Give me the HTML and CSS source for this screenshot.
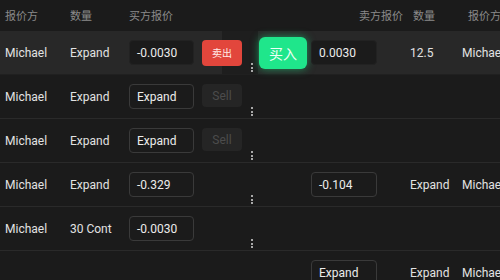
FILE: index.html
```html
<!DOCTYPE html>
<html lang="zh">
<head>
<meta charset="utf-8">
<link rel="stylesheet" href="styles.css">
</head>
<body>
<div class="book">
  <div class="head">
    <span class="h h-name">报价方</span>
    <span class="h h-qty">数量</span>
    <span class="h h-bid">买方报价</span>
    <span class="h h-ask">卖方报价</span>
    <span class="h h-qty2">数量</span>
    <span class="h h-name2">报价方</span>
  </div>

  <div class="row row-active">
    <span class="cell name">Michael</span>
    <span class="cell qty">Expand</span>
    <span class="cell bid"><span class="box box-fill">-0.0030</span></span>
    <span class="cell sell"><span class="btn btn-sell">卖出</span></span>
    <span class="cell grip"><i></i><i></i><i></i></span>
    <span class="cell buy"><span class="btn btn-buy">买入</span></span>
    <span class="cell ask"><span class="box box-fill">0.0030</span></span>
    <span class="cell qty2">12.5</span>
    <span class="cell name2">Michael</span>
  </div>

  <div class="row">
    <span class="cell name">Michael</span>
    <span class="cell qty">Expand</span>
    <span class="cell bid"><span class="box">Expand</span></span>
    <span class="cell sell"><span class="btn btn-off">Sell</span></span>
    <span class="cell grip"><i></i><i></i><i></i></span>
    <span class="cell buy"></span>
    <span class="cell ask"></span>
    <span class="cell qty2"></span>
    <span class="cell name2"></span>
  </div>

  <div class="row">
    <span class="cell name">Michael</span>
    <span class="cell qty">Expand</span>
    <span class="cell bid"><span class="box">Expand</span></span>
    <span class="cell sell"><span class="btn btn-off">Sell</span></span>
    <span class="cell grip"><i></i><i></i><i></i></span>
    <span class="cell buy"></span>
    <span class="cell ask"></span>
    <span class="cell qty2"></span>
    <span class="cell name2"></span>
  </div>

  <div class="row">
    <span class="cell name">Michael</span>
    <span class="cell qty">Expand</span>
    <span class="cell bid"><span class="box">-0.329</span></span>
    <span class="cell sell"></span>
    <span class="cell grip"><i></i><i></i><i></i></span>
    <span class="cell buy"></span>
    <span class="cell ask"><span class="box">-0.104</span></span>
    <span class="cell qty2">Expand</span>
    <span class="cell name2">Michael</span>
  </div>

  <div class="row">
    <span class="cell name">Michael</span>
    <span class="cell qty">30 Cont</span>
    <span class="cell bid"><span class="box">-0.0030</span></span>
    <span class="cell sell"></span>
    <span class="cell grip"><i></i><i></i><i></i></span>
    <span class="cell buy"></span>
    <span class="cell ask"></span>
    <span class="cell qty2"></span>
    <span class="cell name2"></span>
  </div>

  <div class="row">
    <span class="cell name"></span>
    <span class="cell qty"></span>
    <span class="cell bid"></span>
    <span class="cell sell"></span>
    <span class="cell grip"></span>
    <span class="cell buy"></span>
    <span class="cell ask"><span class="box">Expand</span></span>
    <span class="cell qty2">Expand</span>
    <span class="cell name2">Michael</span>
  </div>
</div>
</body>
</html>
```

FILE: styles.css
```css
html, body {
  margin: 0;
  padding: 0;
  background: #1b1b1b;
  overflow: hidden;
}
body {
  width: 500px;
  height: 280px;
  font-family: "Roboto", "Noto Sans CJK SC", sans-serif;
  font-size: 12px;
  color: #e2e2e2;
}
.book {
  width: 520px;
}
.head {
  display: grid;
  grid-template-columns: 65px 59px 235px 54px 55px 52px;
  height: 31px;
  align-items: center;
  color: #8a8a8a;
  font-family: "Noto Sans CJK SC", sans-serif;
  font-size: 11px;
}
.h {
  padding-left: 5px;
  white-space: nowrap;
  padding-bottom: 2px;
}
.h-name2 { padding-left: 0; }
.h-qty2 { padding-left: 0; }
.h-ask { padding-left: 0; }

.row {
  display: grid;
  grid-template-columns: 65px 59px 74px 49px 10px 52px 71px 75px 60px;
  height: 44px;
  box-sizing: border-box;
  border-bottom: 1px solid #2a2a2a;
  align-items: center;
}
.row-active {
  background: linear-gradient(to right, #282828 222px, #1e1e1e 222px, #1e1e1e 258px, #282828 258px);
  border-bottom-color: #202020;
}
.cell {
  white-space: nowrap;
  display: flex;
  align-items: center;
}
.name { padding-left: 5px; }
.qty { padding-left: 5px; }
.bid { padding-left: 5px; }
.sell { padding-left: 4px; }
.buy { padding-left: 2px; }
.ask { padding-left: 2px; }
.qty2 { padding-left: 30px; }
.name2 { padding-left: 7px; }

.box {
  box-sizing: border-box;
  width: 65px;
  height: 25px;
  border: 1px solid #3a3a3a;
  border-radius: 4px;
  padding-left: 7px;
  display: flex;
  align-items: center;
  color: #ececec;
  font-size: 12px;
}
.box-fill {
  background: #1b1b1b;
  border-color: #222222;
}
.ask .box { width: 66px; }

.btn {
  display: flex;
  align-items: center;
  justify-content: center;
  box-sizing: border-box;
}
.btn-sell {
  width: 40px;
  height: 26px;
  background: #e2463c;
  border-radius: 4px;
  color: #ffe9e6;
  font-family: "Noto Sans CJK SC", sans-serif;
  font-size: 10px;
}
.btn-off {
  width: 40px;
  height: 23px;
  background: #252525;
  border-radius: 4px;
  color: #4c4c4c;
  font-size: 12px;
  margin-bottom: 2px;
}
.btn-buy {
  width: 48px;
  height: 32px;
  background: #1fe68b;
  border-radius: 6px;
  color: #effff6;
  font-family: "Noto Sans CJK SC", sans-serif;
  font-size: 14px;
  box-shadow: 0 0 8px rgba(30, 230, 135, 0.55);
}

.grip {
  flex-direction: column;
  align-self: end;
  align-items: center;
  gap: 1.5px;
  padding-bottom: 2px;
}
.grip i {
  display: block;
  width: 2px;
  height: 2px;
  border-radius: 1px;
  background: #d8d8d8;
}
```
